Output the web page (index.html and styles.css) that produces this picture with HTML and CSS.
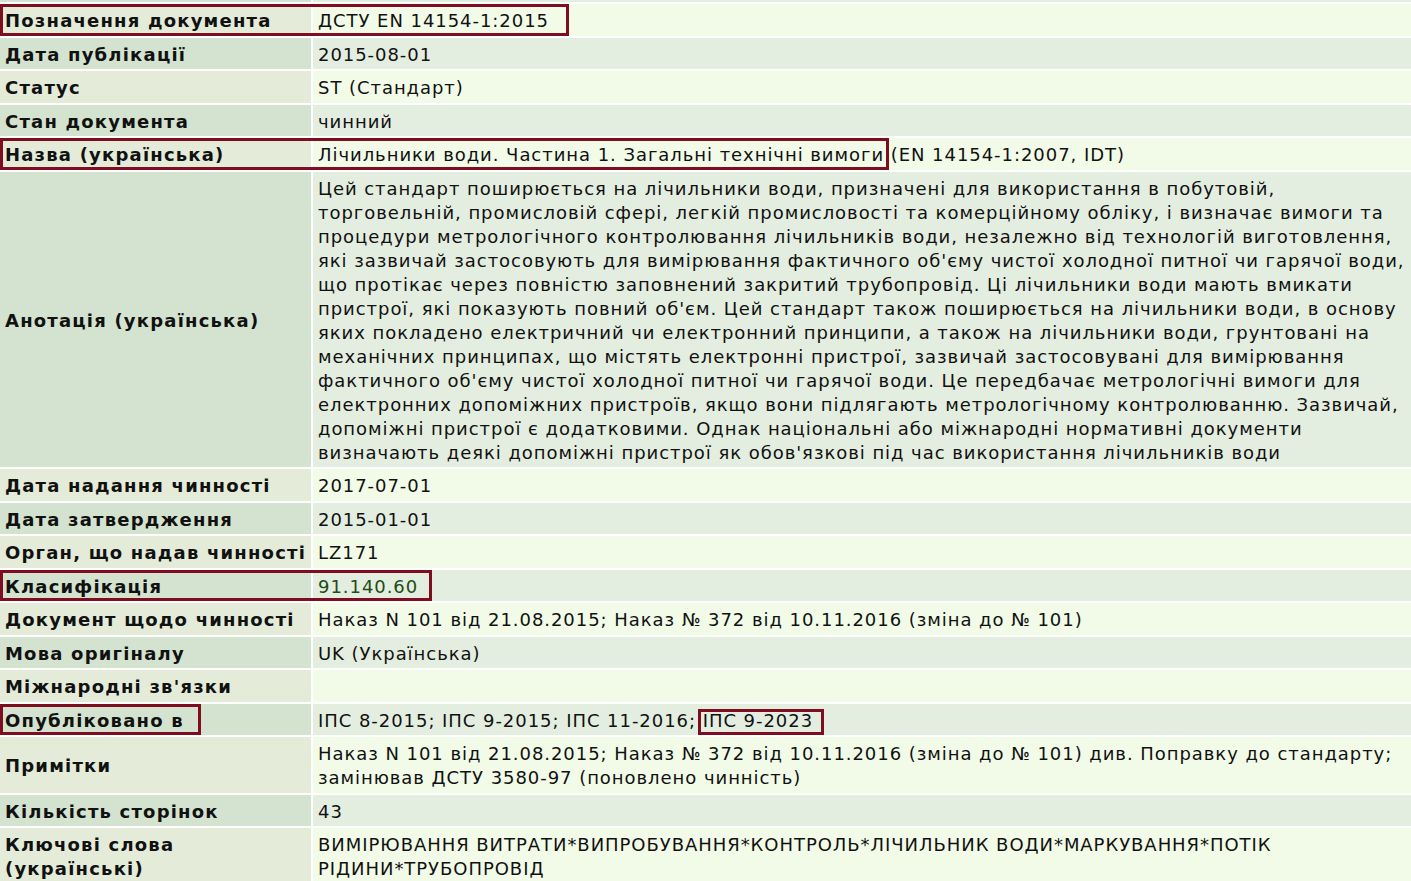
FILE: index.html
```html
<!DOCTYPE html>
<html lang="uk">
<head>
  <meta charset="UTF-8">
  <title>ДСТУ EN 14154-1:2015</title>
  <link rel="stylesheet" href="styles.css">
</head>
<body>
  <table class="doc-info">
    <tr class="dark cut"><td class="label"></td><td class="value"></td></tr>
    <tr class="light">
      <td class="label"><span class="mark mark-designation"></span>Позначення документа</td>
      <td class="value">ДСТУ EN 14154-1:2015</td>
    </tr>
    <tr class="dark">
      <td class="label">Дата публікації</td>
      <td class="value">2015-08-01</td>
    </tr>
    <tr class="light">
      <td class="label">Статус</td>
      <td class="value">ST (Стандарт)</td>
    </tr>
    <tr class="dark">
      <td class="label">Стан документа</td>
      <td class="value">чинний</td>
    </tr>
    <tr class="light">
      <td class="label"><span class="mark mark-title"></span>Назва (українська)</td>
      <td class="value">Лічильники води. Частина 1. Загальні технічні вимоги (EN 14154-1:2007, IDT)</td>
    </tr>
    <tr class="dark">
      <td class="label">Анотація (українська)</td>
      <td class="value">Цей стандарт поширюється на лічильники води, призначені для використання в побутовій, торговельній, промисловій сфері, легкій промисловості та комерційному обліку, і визначає вимоги та процедури метрологічного контролювання лічильників води, незалежно від технологій виготовлення, які зазвичай застосовують для вимірювання фактичного об'єму чистої холодної питної чи гарячої води, що протікає через повністю заповнений закритий трубопровід. Ці лічильники води мають вмикати пристрої, які показують повний об'єм. Цей стандарт також поширюється на лічильники води, в основу яких покладено електричний чи електронний принципи, а також на лічильники води, грунтовані на механічних принципах, що містять електронні пристрої, зазвичай застосовувані для вимірювання фактичного об'єму чистої холодної питної чи гарячої води. Це передбачає метрологічні вимоги для електронних допоміжних пристроїв, якщо вони підлягають метрологічному контролюванню. Зазвичай, допоміжні пристрої є додатковими. Однак національні або міжнародні нормативні документи визначають деякі допоміжні пристрої як обов'язкові під час використання лічильників води</td>
    </tr>
    <tr class="light">
      <td class="label">Дата надання чинності</td>
      <td class="value">2017-07-01</td>
    </tr>
    <tr class="dark">
      <td class="label">Дата затвердження</td>
      <td class="value">2015-01-01</td>
    </tr>
    <tr class="light">
      <td class="label">Орган, що надав чинності</td>
      <td class="value">LZ171</td>
    </tr>
    <tr class="dark">
      <td class="label"><span class="mark mark-class"></span>Класифікація</td>
      <td class="value"><a class="code-link" href="#">91.140.60</a></td>
    </tr>
    <tr class="light">
      <td class="label">Документ щодо чинності</td>
      <td class="value">Наказ N 101 від 21.08.2015; Наказ № 372 від 10.11.2016 (зміна до № 101)</td>
    </tr>
    <tr class="dark">
      <td class="label">Мова оригіналу</td>
      <td class="value">UK (Українська)</td>
    </tr>
    <tr class="light">
      <td class="label">Міжнародні зв'язки</td>
      <td class="value"></td>
    </tr>
    <tr class="dark">
      <td class="label"><span class="mark mark-published"></span>Опубліковано в</td>
      <td class="value">ІПС 8-2015; ІПС 9-2015; ІПС 11-2016; <span class="boxed">ІПС 9-2023</span></td>
    </tr>
    <tr class="light">
      <td class="label">Примітки</td>
      <td class="value">Наказ N 101 від 21.08.2015; Наказ № 372 від 10.11.2016 (зміна до № 101) див. Поправку до стандарту; замінював ДСТУ 3580-97 (поновлено чинність)</td>
    </tr>
    <tr class="dark">
      <td class="label">Кількість сторінок</td>
      <td class="value">43</td>
    </tr>
    <tr class="light">
      <td class="label">Ключові слова (українські)</td>
      <td class="value">ВИМІРЮВАННЯ ВИТРАТИ*ВИПРОБУВАННЯ*КОНТРОЛЬ*ЛІЧИЛЬНИК ВОДИ*МАРКУВАННЯ*ПОТІК РІДИНИ*ТРУБОПРОВІД</td>
    </tr>
  </table>
  <div class="section-line"></div>
</body>
</html>
```

FILE: styles.css
```css
html, body {
  overflow: hidden;
}

body {
  margin: 0;
  background: #fff;
  font-family: "DejaVu Sans", Verdana, sans-serif;
  font-size: 18px;
  letter-spacing: 0.95px;
  color: #111;
}

.doc-info {
  width: 1420px;
  margin: -2px 0 0 -2px;
  border-collapse: separate;
  border-spacing: 2px;
}

.doc-info td {
  padding: 5px 4px 2.5px 5px;
  line-height: 24px;
  vertical-align: middle;
  text-align: left;
}

.doc-info td.label {
  position: relative;
  width: 302px;
  font-weight: bold;
  letter-spacing: 1.2px;
}

.doc-info .cut td {
  height: 2px;
  padding: 0;
  line-height: 0;
}

.light .label { background: #e4ecd9; }
.light .value { background: #f1fbe8; }
.dark .label { background: #d4e3cf; }
.dark .value { background: #e4eee0; }

.code-link {
  color: #1d4d14;
  text-decoration: none;
}

/* red highlight frames */
.mark {
  position: absolute;
  left: 0;
  top: 0;
  bottom: 0;
  border: 3px solid #7d0d1f;
  pointer-events: none;
}

.mark-designation { width: 563px; }
.mark-title { width: 883px; }
.mark-class { width: 426px; }
.mark-published { width: 195px; }

.boxed {
  position: relative;
}

.boxed::after {
  content: "";
  position: absolute;
  left: -5px;
  right: -11px;
  top: -1px;
  bottom: -4px;
  border: 3px solid #7d0d1f;
}

.section-line {
  height: 2px;
  background: #1f5a8f;
}
```
